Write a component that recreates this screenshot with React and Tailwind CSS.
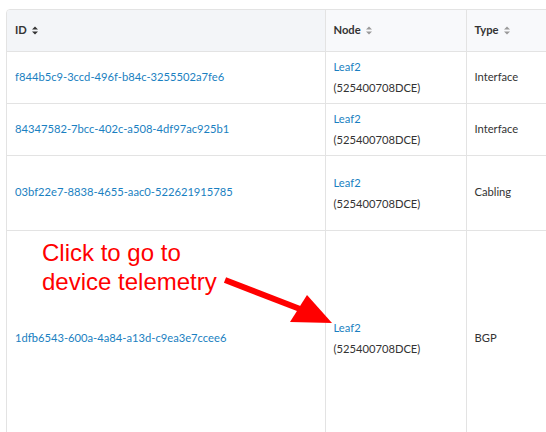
import React from 'react';

const rows = [
    { id: 'f844b5c9-3ccd-496f-b84c-3255502a7fe6', type: 'Interface', h: 'h-[52px]' },
    { id: '84347582-7bcc-402c-a508-4df97ac925b1', type: 'Interface', h: 'h-[52px]' },
    { id: '03bf22e7-8838-4655-aac0-522621915785', type: 'Cabling', h: 'h-[75px]' },
    { id: '1dfb6543-600a-4a84-a13d-c9ea3e7ccee6', type: 'BGP', h: 'h-[216px]' },
];

function SortIcon({ dark }) {
    return (
        <svg width="6" height="9" viewBox="0 0 6 9" className={`inline-block ml-[5px] ${dark ? 'text-[#333]' : 'text-[#999]'}`}>
            <path d="M0 3.6 L3 0.4 L6 3.6 Z M0 5.4 L3 8.6 L6 5.4 Z" fill="currentColor" />
        </svg>
    );
}

export default function App() {
    return (
        <div className="relative w-[546px] h-[432px] overflow-hidden bg-white" style={{ fontFamily: 'Lato, "Open Sans", sans-serif' }}>
            <div className="absolute left-[6px] top-[9px] w-[600px] border border-[#e3e3e3] rounded-tl-[4px] overflow-hidden">
                <table className="table-fixed w-full border-collapse text-[11.2px] text-[#333]">
                    <colgroup>
                        <col className="w-[318px]" />
                        <col className="w-[141px]" />
                        <col />
                    </colgroup>
                    <thead>
                        <tr className="h-[41px] border-b border-[#e3e3e3]">
                            <th className="bg-[#f3f5f8] text-left font-bold pl-[8px] border-r border-[#e3e3e3]">
                                ID<SortIcon dark />
                            </th>
                            <th className="bg-[#f8f9fb] text-left font-bold pl-[8px] border-r border-[#e3e3e3]">
                                Node<SortIcon />
                            </th>
                            <th className="bg-[#f8f9fb] text-left font-bold pl-[8px]">
                                Type<SortIcon />
                            </th>
                        </tr>
                    </thead>
                    <tbody>
                        {rows.map((r) => (
                            <tr key={r.id} className={`${r.h} border-b border-[#e3e3e3]`}>
                                <td className="pl-[8px] align-middle text-[#1a7fc1] border-r border-[#e3e3e3]">{r.id}</td>
                                <td className="pl-[8px] align-middle leading-[21px] border-r border-[#e3e3e3]">
                                    <div className="text-[#1a7fc1]">Leaf2</div>
                                    <div>(525400708DCE)</div>
                                </td>
                                <td className="pl-[8px] align-middle">{r.type}</td>
                            </tr>
                        ))}
                    </tbody>
                </table>
            </div>

            {/* annotation */}
            <div className="absolute left-[42px] top-[238px] text-[24px] leading-[29px] text-[#ff0000]" style={{ fontFamily: '"Liberation Sans", Arial, sans-serif' }}>
                <div>Click to go to</div>
                <div>device telemetry</div>
            </div>
            <svg className="absolute left-0 top-0" width="546" height="432" viewBox="0 0 546 432">
                <line x1="225" y1="280" x2="300" y2="309" stroke="#ff0000" strokeWidth="6" />
                <polygon points="290,322 307,295 332,323" fill="#ff0000" />
            </svg>
        </div>
    );
}
